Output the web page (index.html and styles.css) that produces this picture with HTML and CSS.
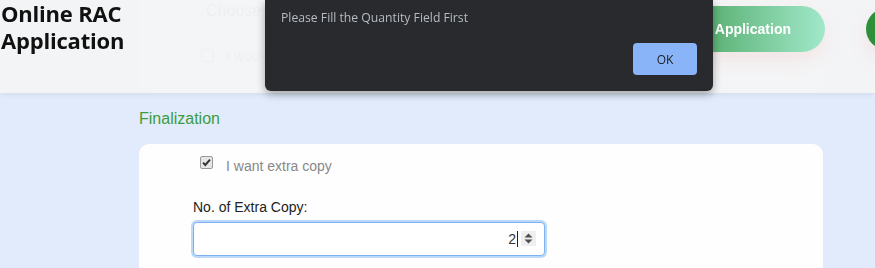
FILE: index.html
```html
<!DOCTYPE html>
<html lang="en">
<head>
<meta charset="utf-8">
<title>Online RAC Application</title>
<link rel="stylesheet" href="styles.css">
</head>
<body>
<header class="topbar">
  <h1 class="brand">Online RAC<br>Application</h1>
  <div class="actions">
    <a class="pill" href="#">Application</a>
    <span class="avatar"></span>
  </div>
</header>

<main class="page">
  <section class="card card-prev">
    <div class="ghost-input">Choose File</div>
    <label class="check-row">
      <span class="box"></span>
      <span class="check-text">I would like to receive updates</span>
    </label>
  </section>

  <h2 class="section-title">Finalization</h2>

  <section class="card card-final">
    <label class="check-row">
      <span class="box box-checked">
        <svg viewBox="0 0 13 13" width="13" height="13"><path d="M3 6.6 L5.3 9 L10 3.6" fill="none" stroke="#333" stroke-width="2"/></svg>
      </span>
      <span class="check-text">I want extra copy</span>
    </label>
    <label class="field-label" for="qty">No. of Extra Copy:</label>
    <div class="num-wrap">
      <input id="qty" class="num-input" type="text" value="2">
      <span class="spin">
        <svg viewBox="0 0 15 15" width="15" height="15"><path d="M3.5 6.5 L7.5 2.5 L11.5 6.5 Z M3.5 8.5 L7.5 12.5 L11.5 8.5 Z" fill="#4f4f4f"/></svg>
      </span>
    </div>
  </section>
</main>

<div class="dialog" role="alertdialog">
  <p class="dialog-msg">Please Fill the Quantity Field First</p>
  <button class="dialog-ok" type="button">OK</button>
</div>
</body>
</html>
```

FILE: styles.css
```css
html, body {
  margin: 0;
  padding: 0;
}
body {
  width: 875px;
  height: 268px;
  overflow: hidden;
  background: #e1ebfc;
  font-family: "Liberation Sans", Arial, sans-serif;
}

/* header */
.topbar {
  position: fixed;
  top: 0;
  left: 0;
  right: 0;
  height: 93px;
  z-index: 10;
  display: flex;
  align-items: flex-start;
  background: rgba(243, 244, 246, 0.95);
  box-shadow: 0 2px 6px rgba(0, 0, 0, 0.06);
}
.brand {
  margin: 0;
  padding-left: 1px;
  font-family: "Open Sans", "Noto Sans", sans-serif;
  font-weight: 700;
  font-size: 22px;
  line-height: 27px;
  color: #111;
  letter-spacing: -0.2px;
}
.actions {
  margin-left: auto;
  margin-right: -33px;
  margin-top: 6px;
  display: flex;
  align-items: center;
  gap: 41px;
}
.pill {
  display: flex;
  align-items: center;
  justify-content: flex-end;
  width: 190px;
  height: 46px;
  box-sizing: border-box;
  padding-right: 34px;
  border-radius: 23px;
  background: linear-gradient(90deg, #2f8f3e 0%, #a1e8ca 100%);
  color: #fff;
  font-weight: 700;
  font-size: 14px;
  text-decoration: none;
  box-shadow: 0 8px 18px rgba(240, 150, 150, 0.18);
}
.avatar {
  width: 42px;
  height: 42px;
  border-radius: 50%;
  background: #2e8f3a;
  box-shadow: 0 8px 18px rgba(240, 150, 150, 0.18);
}

/* page */
.page {
  width: 684px;
  margin-left: 139px;
}
.card {
  background: #fefefe;
  border-radius: 10px;
}
.card-prev {
  margin-top: -30px;
  padding: 18px 0 25px 59px;
}
.ghost-input {
  width: 352px;
  height: 34px;
  box-sizing: border-box;
  border: 1px solid #d4d4d4;
  border-radius: 4px;
  padding: 12px 7px 0;
  font-size: 16px;
  line-height: 20px;
  color: #8a8a8a;
}
.card-prev .check-row {
  margin-top: 23px;
  padding-left: 3px;
  align-items: center;
  height: 20px;
}
.check-row {
  display: flex;
  align-items: flex-start;
  height: 24px;
}
.box {
  width: 13px;
  height: 13px;
  box-sizing: border-box;
  border: 1px solid #8f8f8f;
  border-radius: 2px;
  background: #fff;
  flex: none;
}
.box-checked {
  margin-top: 3px;
  background: #e6e6e6;
  border-color: #9a9a9a;
  position: relative;
}
.box-checked svg {
  position: absolute;
  left: -1px;
  top: -1px;
}
.check-text {
  margin-left: 12px;
  font-size: 14px;
  line-height: 24px;
  color: #888;
  white-space: nowrap;
}
.card-prev .check-text {
  line-height: 20px;
  padding-top: 2px;
}
.section-title {
  margin: 19px 0 15px;
  font-weight: 400;
  font-size: 16px;
  line-height: 20px;
  color: #3d9b3d;
}
.card-final {
  padding: 9px 54px 40px;
}
.card-final .check-row {
  padding-left: 7px;
}
.card-final .check-text {
  margin-left: 13px;
  color: #888;
  padding-top: 1px;
}
.field-label {
  display: block;
  margin-top: 20px;
  font-size: 14px;
  line-height: 20px;
  color: #222;
}
.num-wrap {
  position: relative;
  width: 352px;
  margin-top: 5px;
}
.num-input {
  display: block;
  width: 352px;
  height: 34px;
  box-sizing: border-box;
  margin: 0;
  border: 1px solid #7db2f1;
  border-radius: 4px;
  box-shadow: 0 0 0 2px #bcd9fb;
  outline: none;
  padding: 0 28px 0 8px;
  text-align: right;
  font-family: "Liberation Sans", Arial, sans-serif;
  font-size: 14px;
  color: #333;
  background: #fff;
}
.num-wrap::after {
  content: "";
  position: absolute;
  right: 27px;
  top: 9px;
  width: 1px;
  height: 16px;
  background: #222;
}
.spin {
  position: absolute;
  right: 9px;
  top: 9px;
  width: 15px;
  height: 15px;
  background: #efefef;
}
.spin svg {
  display: block;
}

/* alert dialog */
.dialog {
  position: fixed;
  top: 0;
  left: 265px;
  width: 448px;
  height: 91px;
  box-sizing: border-box;
  z-index: 20;
  display: flex;
  flex-direction: column;
  padding: 10px 16px 16px;
  background: #292a2d;
  border-radius: 0 0 6px 6px;
  box-shadow: 0 3px 8px rgba(0, 0, 0, 0.35);
  font-family: "Open Sans", "Noto Sans", sans-serif;
}
.dialog-msg {
  margin: 0;
  font-size: 12.2px;
  line-height: 16px;
  color: #b6bcc3;
}
.dialog-ok {
  margin-top: auto;
  align-self: flex-end;
  width: 64px;
  height: 32px;
  border: none;
  border-radius: 4px;
  background: #8ab4f8;
  color: #202124;
  font-family: "Open Sans", "Noto Sans", sans-serif;
  font-size: 12px;
}
```
